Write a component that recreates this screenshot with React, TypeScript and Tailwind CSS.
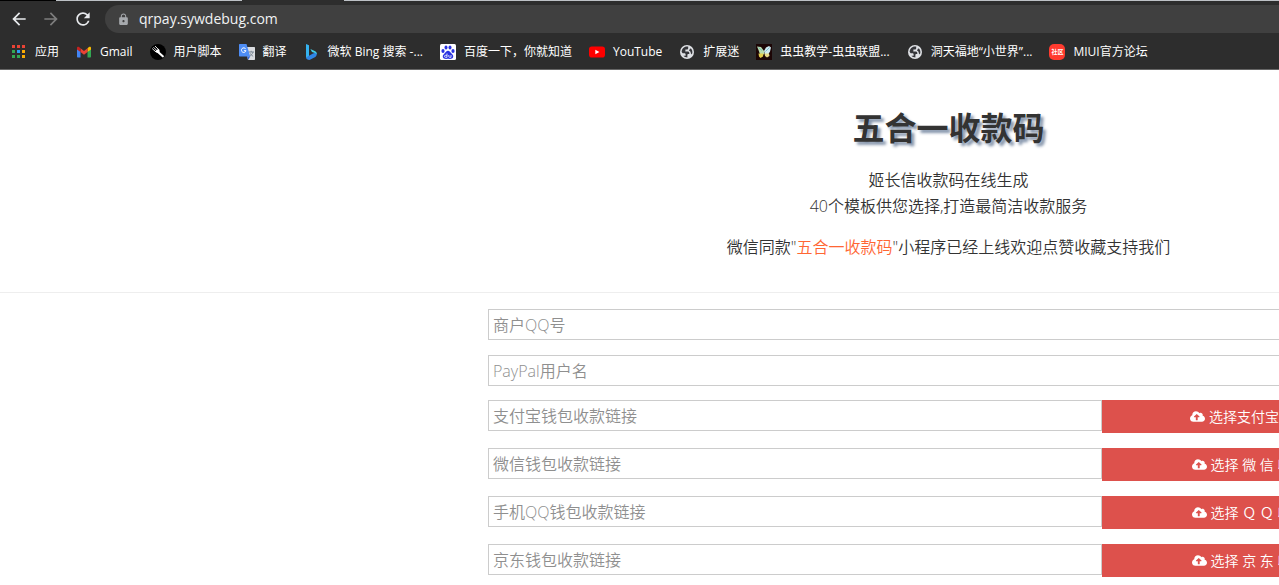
import React from "react";
import { FaCloudUploadAlt } from "react-icons/fa";
import { MdArrowBack, MdArrowForward, MdLock, MdRefresh } from "react-icons/md";

const AppsIcon = () => (
  <svg viewBox="0 0 16 16" className="w-4 h-4">
    <path d="M1 1h3v3H1zM6 1h3v3H6zM11 1h3v3h-3z" fill="#ea4335" />
    <path d="M1 6h3v3H1zM1 11h3v3H1z" fill="#34a853" />
    <path d="M6 6h3v3H6z" fill="#2a9df4" />
    <path d="M6 11h3v3H6z" fill="#34a853" />
    <path d="M11 6h3v3h-3zM11 11h3v3h-3z" fill="#fbab04" />
  </svg>
);

const GmailIcon = () => (
  <svg viewBox="0 0 16 16" className="w-4 h-4">
    <path d="M1 4v8.500c0 .6.400 1 1 1h2.500V7.200z" fill="#4285f4" />
    <path d="M15 4v8.500c0 .6-.400 1-1 1h-2.500V7.200z" fill="#34a853" />
    <path d="M11.500 4.200l1.500-1.200c1-.7 2-.1 2 .9v1.500L11.500 8z" fill="#fbbc04" />
    <path d="M4.500 4.200V8L8 10.800 11.500 8V4.200L8 7z" fill="#ea4335" />
    <path d="M1 5.400V3.900c0-1 1-1.600 2-.9l1.500 1.200V8z" fill="#c5221f" />
  </svg>
);

const ScriptIcon = () => (
  <svg viewBox="0 0 16 16" className="w-4 h-4">
    <circle cx="8" cy="8" r="8" fill="#000" />
    <path d="M8 8l4.800 4.300" stroke="#fff" strokeWidth="2.200" strokeLinecap="round" />
    <path
      d="M2.500 4.800L6 8M3.800 3.500L7.300 7M5.300 2.300l3.500 3.500"
      stroke="#fff"
      strokeWidth=".9"
      strokeLinecap="round"
    />
    <path d="M5.200 7.300l3.200-2.600c1.400 1.400 1.600 2.500.9 3.500-1.300 1.200-2.800.8-4.100-.9z" fill="#fff" />
  </svg>
);

const TranslateIcon = () => (
  <svg viewBox="0 0 16 16" className="w-4 h-4">
    <path d="M6 3h9c.6 0 1 .4 1 1v11c0 .6-.4 1-1 1H9z" fill="#dadce0" />
    <path
      d="M9.500 8h5.500M12.200 6.800V8M14 8c-.5 2-2 3.500-3.500 4.300M11 9.500l3.200 3"
      stroke="#7b8794"
      fill="none"
    />
    <path d="M1 0h6.500l3.700 12.500H1c-.6 0-1-.4-1-1V1c0-.6.400-1 1-1z" fill="#4e8df5" />
    <path d="M8 12.500h3.200L9.200 16z" fill="#3367d6" />
    <path d="M6.700 4.900A2.300 2.300 0 1 0 7 6.700H4.900" stroke="#fff" strokeWidth="1" fill="none" />
  </svg>
);

const BingIcon = () => (
  <svg viewBox="0 0 16 16" className="w-4 h-4">
    <path d="M2 0l3 1.200v11L2 14z" fill="#35b3f0" />
    <path
      d="M2 13.500l3-1.700 4-2.300 3.500-1c.7 1.800.2 3.500-1.200 4.400L5.500 16c-2 0-3.500-1-3.500-2.500z"
      fill="#2f86e6"
    />
    <path d="M6.400 5l4.300 2c1.300.6 2.100 1.700 2.100 3.200-.4-.6-1-.9-1.800-1.100L8 8z" fill="#41d0e8" />
  </svg>
);

const BaiduIcon = () => (
  <svg viewBox="0 0 16 16" className="w-4 h-4">
    <rect width="16" height="16" rx="1.500" fill="#fff" />
    <g fill="#2932e1">
      <ellipse cx="3" cy="7" rx="1.600" ry="2" />
      <ellipse cx="6" cy="3.500" rx="1.500" ry="2" />
      <ellipse cx="10" cy="3.500" rx="1.500" ry="2" />
      <ellipse cx="13" cy="7" rx="1.600" ry="2" />
      <path d="M8 6.800c1.700 0 2.200 1.600 3.500 2.800 1.500 1.300 2 2.300 1.600 3.600-.5 1.600-2 1.900-5.100 1.600-3.100.3-4.600 0-5.100-1.600-.4-1.300.1-2.300 1.600-3.600C5.800 8.400 6.300 6.800 8 6.800z" />
    </g>
    <path
      d="M7 9.500v3.800H5.500a1 1 0 0 1 0-2H7M8.800 11v1.500c0 .5.300.8.800.8H11V11"
      stroke="#fff"
      strokeWidth=".8"
      fill="none"
    />
  </svg>
);

const YouTubeIcon = () => (
  <svg viewBox="0 0 16 16" className="w-4 h-4">
    <rect y="2.500" width="16" height="11" rx="2.800" fill="#f00" />
    <path d="M6.300 5.700v4.600L10.400 8z" fill="#fff" />
  </svg>
);

const GlobeIcon = () => (
  <svg viewBox="0 0 16 16" className="w-4 h-4">
    <circle cx="8" cy="8" r="7" fill="#dfe1e5" />
    <path
      d="M2.600 7.500c.3-2.400 2-4.300 4.300-4.900h2.300v1.600c0 .8-.6 1.400-1.400 1.400H6.400v1.400c0 .4-.3.700-.7.700H4.300c1.200.1 4.900-.3 5.300 0 .5.300.7.700.7 1.200v1h-1.100c-.5 0-.8.300-.8.800v2.700c-1.600 0-3-.6-4-1.700h2.200v-1.200c0-.7-.5-1.200-1.200-1.200H4.300c-.8 0-1.400-.6-1.700-1.800z M11 4.400l1.200.3c.8 1 1.200 2.100 1.200 3.300 0 .9-.2 1.700-.600 2.400l-1-1.100c0-1.500-.6-2.400-1.800-2.500z"
      fill="#35363a"
    />
  </svg>
);

const ButterflyIcon = () => (
  <svg viewBox="0 0 16 16" className="w-4 h-4">
    <rect width="16" height="16" fill="#1c0606" />
    <path d="M1 2.500l4 .5 3 4 .5 3-3.500 1L3.500 9 2.500 6z" fill="#b9dcae" />
    <path d="M8 7l2-3.500 3-1.500 2 1.500-1 4L12.500 10 9 10z" fill="#cfeaf2" />
    <path d="M2.500 9.500l5 0-.5 3L4.500 14 3 12.500z" fill="#e3cf4e" />
    <path d="M8.500 9.500L13 9.500l.5 2.500-2.500 1.500-2-1.500z" fill="#e8d98a" />
    <path d="M2.500 3.500l3.500 3M13.500 3.500L9.500 7.500" stroke="#5fa9bd" strokeWidth=".7" />
  </svg>
);

const MiuiIcon = () => (
  <span className="flex h-4 w-4 items-center justify-center rounded-[5px] bg-[#ff3b2f] text-[6px] leading-none font-bold text-white">
    社区
  </span>
);

const bookmarks = [
  { label: "应用", icon: <AppsIcon /> },
  { label: "Gmail", icon: <GmailIcon /> },
  { label: "用户脚本", icon: <ScriptIcon /> },
  { label: "翻译", icon: <TranslateIcon /> },
  { label: "微软 Bing 搜索 -...", icon: <BingIcon /> },
  { label: "百度一下，你就知道", icon: <BaiduIcon /> },
  { label: "YouTube", icon: <YouTubeIcon /> },
  { label: "扩展迷", icon: <GlobeIcon /> },
  { label: "虫虫教学-虫虫联盟...", icon: <ButterflyIcon /> },
  { label: "洞天福地“小世界”...", icon: <GlobeIcon /> },
  { label: "MIUI官方论坛", icon: <MiuiIcon /> },
];

const accounts = [
  { id: "qq", placeholder: "商户QQ号" },
  { id: "paypal", placeholder: "PayPal用户名" },
];

const wallets = [
  { id: "alipay", placeholder: "支付宝钱包收款链接", action: "选择支付宝收款码" },
  { id: "wechat", placeholder: "微信钱包收款链接", action: "选择 微 信 收款码" },
  { id: "qqpay", placeholder: "手机QQ钱包收款链接", action: "选择 Ｑ Ｑ 收款码" },
  { id: "jd", placeholder: "京东钱包收款链接", action: "选择 京 东 收款码" },
];

const inputClass =
  "h-[31px] border border-[#ccc] bg-white px-1 text-base text-[#333] placeholder:text-[#8f8f8f] outline-none focus:border-[#66afe9]";

const BrowserBar = () => (
  <div className="border-b border-[#666] bg-[#2d2d2d] text-white">
    {/* Tab strip edge */}
    <div className="flex h-px">
      <div className="w-14 bg-black" />
      <div className="w-[186px] bg-[#bdc1c6]" />
      <div className="w-[102px]" />
      <div className="flex-1 bg-[#bdc1c6]" />
    </div>
    <div className="flex items-center pt-1 pl-[9px]">
      <button aria-label="后退" className="mr-3">
        <MdArrowBack className="h-5 w-5 text-[#e8eaed]" />
      </button>
      <button aria-label="前进" className="mr-3">
        <MdArrowForward className="h-5 w-5 text-[#7d7d7d]" />
      </button>
      <button aria-label="刷新" className="mr-3">
        <MdRefresh className="h-5 w-5 text-[#e8eaed]" />
      </button>
      <div className="flex h-7 flex-1 items-center gap-[9px] rounded-l-full bg-[#404040] pl-3">
        <MdLock className="h-[13px] w-[13px] text-[#a6a9ad]" />
        <input
          aria-label="地址"
          defaultValue="qrpay.sywdebug.com"
          className="flex-1 bg-transparent text-sm text-[#f1f3f4] outline-none"
        />
      </div>
    </div>
    <nav className="flex h-9 items-center gap-[17px] overflow-hidden pt-px pl-[11px] text-xs whitespace-nowrap">
      {bookmarks.map((item) => (
        <a key={item.label} href="#" className="flex shrink-0 items-center gap-2">
          {item.icon}
          <span>{item.label}</span>
        </a>
      ))}
    </nav>
  </div>
);

const App: React.FC = () => {
  return (
    <div className="min-h-screen overflow-hidden bg-white font-['Open_Sans','Noto_Sans_CJK_SC',sans-serif] text-[#333]">
      <BrowserBar />

      <div className="min-w-[1897px] font-[350]">
        <header className="border-b border-[#eee] pt-[35px] pb-8 text-center">
          <h1 className="text-[32px] leading-[46px] font-bold [text-shadow:3px_3px_3px_#8494ab]">
            五合一收款码
          </h1>
          <p className="mt-4 leading-[26px]">
            姬长信收款码在线生成
            <br />
            40个模板供您选择,打造最简洁收款服务
          </p>
          <p className="mt-[15px] leading-[26px]">
            微信同款"<a href="#" className="text-[#ff6633]">五合一收款码</a>
            "小程序已经上线欢迎点赞收藏支持我们
          </p>
        </header>

        <form className="mx-auto w-[921px] pt-4">
          <div className="flex flex-col gap-[15px]">
            {accounts.map((item) => (
              <input
                key={item.id}
                name={item.id}
                aria-label={item.placeholder}
                placeholder={item.placeholder}
                className={`${inputClass} w-full`}
              />
            ))}
          </div>

          <div className="mt-[14px] flex flex-col gap-[15px]">
            {wallets.map((item) => (
              <div key={item.id} className="flex items-start">
                <input
                  name={item.id}
                  aria-label={item.placeholder}
                  placeholder={item.placeholder}
                  className={`${inputClass} w-2/3`}
                />
                <button
                  type="button"
                  className="flex h-[33px] w-1/3 items-center justify-center gap-1 bg-[#dd514c] text-sm text-white"
                >
                  <FaCloudUploadAlt className="h-[15px] w-[15px]" />
                  {item.action}
                </button>
              </div>
            ))}
          </div>
        </form>
      </div>
    </div>
  );
};

export default App;
